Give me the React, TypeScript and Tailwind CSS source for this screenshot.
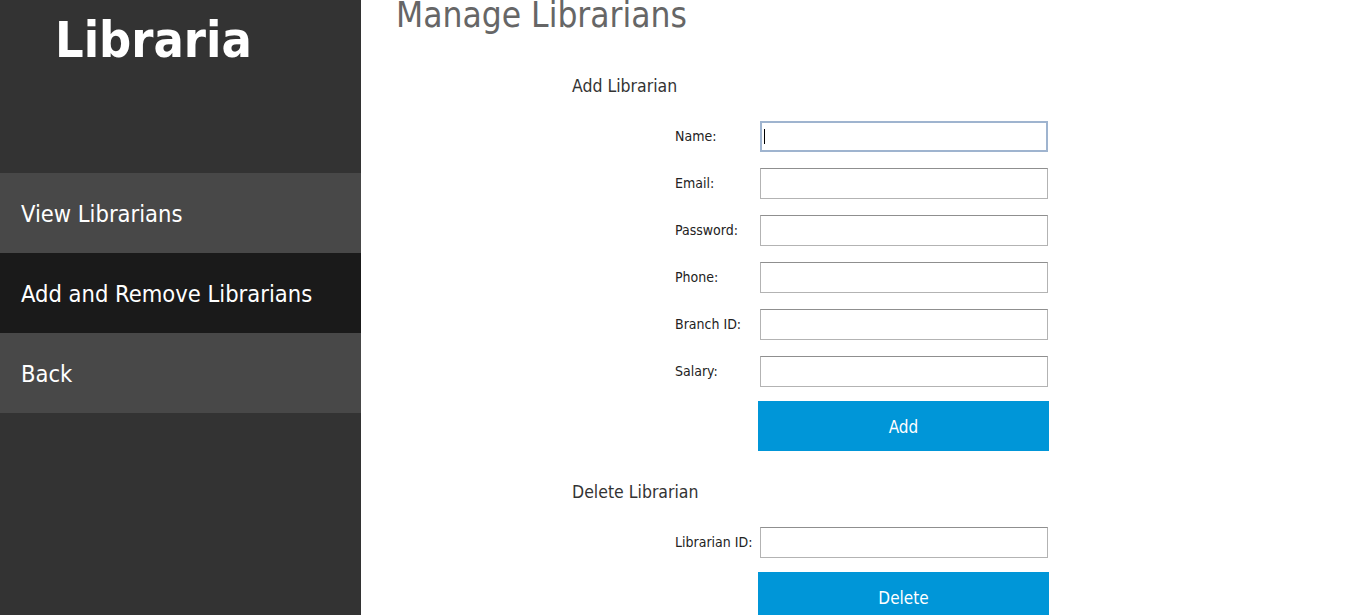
const font = { fontFamily: "Tahoma, 'DejaVu Sans Condensed', 'DejaVu Sans', sans-serif" };

function Field({ label, focused }: { label: string; focused?: boolean }) {
  return (
    <div className="flex items-center h-[31px] mb-4">
      <label className="w-[85px] text-[14px] text-[#222]">{label}</label>
      <div className="relative">
        <input
          type="text"
          className={
            "w-[288px] h-[31px] bg-white outline-none border " +
            (focused
              ? "border-2 border-[#9fb4cf]"
              : "border-[#b3b3b3] border-t-[#8f8f8f]")
          }
        />
        {focused && <span className="absolute left-[4px] top-[8px] w-px h-[15px] bg-black" />}
      </div>
    </div>
  );
}

export default function App() {
  const nav = [
    { label: "View Librarians", active: false },
    { label: "Add and Remove Librarians", active: true },
    { label: "Back", active: false },
  ];

  return (
    <div className="flex w-full h-[615px] overflow-hidden bg-white" style={font}>
      {/* sidebar */}
      <aside className="w-[361px] shrink-0 bg-[#333333] flex flex-col">
        <div className="h-[173px] pl-[55px] pt-[8px]">
          <h1 className="text-[50px] font-bold text-white leading-[64px]">Libraria</h1>
        </div>
        {nav.map((item) => (
          <a
            key={item.label}
            className={
              "h-20 flex items-center pl-[21px] pt-1 text-[23.5px] text-white " +
              (item.active ? "bg-[#1a1a1a]" : "bg-[#484848]")
            }
          >
            {item.label}
          </a>
        ))}
      </aside>

      {/* main */}
      <main className="flex-1 pl-[35px]">
        <h2 className="text-[35px] text-[#666666] leading-[35px] -mt-[2px]">Manage Librarians</h2>

        <div className="ml-[176px] mt-[43px]">
          <h3 className="text-[17.5px] text-[#333] leading-5">Add Librarian</h3>
          <div className="ml-[103px] mt-[25px]">
            <Field label="Name:" focused />
            <Field label="Email:" />
            <Field label="Password:" />
            <Field label="Phone:" />
            <Field label="Branch ID:" />
            <Field label="Salary:" />
            <button className="ml-[83px] -mt-[2px] pt-1 w-[291px] h-[50px] bg-[#0096d8] text-white text-[17px]">
              Add
            </button>
          </div>

          <h3 className="text-[17.5px] text-[#333] leading-5 mt-[31px]">Delete Librarian</h3>
          <div className="ml-[103px] mt-[25px]">
            <Field label="Librarian ID:" />
            <button className="ml-[83px] -mt-[2px] pt-1 w-[291px] h-[50px] bg-[#0096d8] text-white text-[17px]">
              Delete
            </button>
          </div>
        </div>
      </main>
    </div>
  );
}
